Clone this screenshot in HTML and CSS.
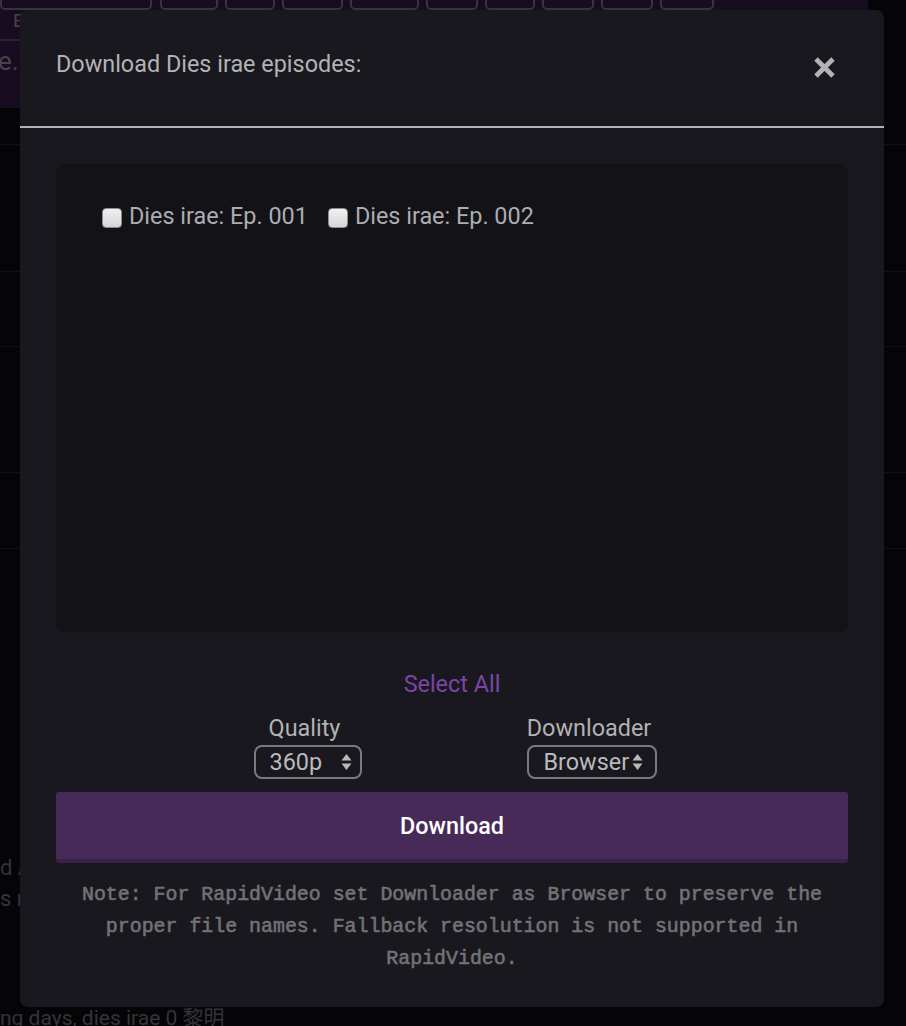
FILE: index.html
```html
<!DOCTYPE html>
<html lang="en">
<head>
<meta charset="utf-8">
<title>Download Dies irae episodes</title>
<link rel="stylesheet" href="styles.css">
</head>
<body>
<div class="page">
  <header class="site-header">
    <nav class="tabs">
      <span class="tab"></span><span class="tab"></span><span class="tab"></span><span class="tab"></span><span class="tab"></span><span class="tab"></span><span class="tab"></span><span class="tab"></span><span class="tab"></span><span class="tab"></span>
    </nav>
    <div class="subbar">E</div>
    <h1 class="site-title">e.i</h1>
  </header>
  <ul class="rows">
    <li class="row row-a"></li>
    <li class="row row-b"></li>
    <li class="row row-c"></li>
    <li class="row row-d"></li>
    <li class="row row-e"></li>
  </ul>
  <div class="bg-desc">
    <p>d A</p>
    <p>s n</p>
  </div>
  <p class="bg-tags">ng days, dies irae 0 黎明</p>
</div>

<div class="backdrop"></div>

<div class="modal" role="dialog">
  <div class="modal-header">
    <h2 class="modal-title">Download Dies irae episodes:</h2>
    <button class="close" aria-label="Close">
      <svg width="23" height="23" viewBox="0 0 23 23"><path d="M3 3 L20 20 M20 3 L3 20" stroke="#b3b3b3" stroke-width="4.8" fill="none"/></svg>
    </button>
  </div>
  <div class="modal-body">
    <div class="episodes">
      <label class="ep"><span class="box"></span>Dies irae: Ep. 001</label>
      <label class="ep"><span class="box"></span>Dies irae: Ep. 002</label>
    </div>
    <a class="select-all">Select All</a>
    <div class="options">
      <div class="opt opt-quality">
        <div class="opt-label">Quality</div>
        <div class="select"><span>360p</span>
          <svg width="11" height="18" viewBox="0 0 11 18"><path d="M5.5 1 L10.5 7.5 L0.5 7.5 Z M0.5 10.5 L10.5 10.5 L5.5 17 Z" fill="#b8b8b8"/></svg>
        </div>
      </div>
      <div class="opt opt-dl">
        <div class="opt-label">Downloader</div>
        <div class="select"><span>Browser</span>
          <svg width="11" height="18" viewBox="0 0 11 18"><path d="M5.5 1 L10.5 7.5 L0.5 7.5 Z M0.5 10.5 L10.5 10.5 L5.5 17 Z" fill="#b8b8b8"/></svg>
        </div>
      </div>
    </div>
    <button class="download">Download</button>
    <p class="note">Note: For RapidVideo set Downloader as Browser to preserve the proper file names. Fallback resolution is not supported in RapidVideo.</p>
  </div>
</div>
</body>
</html>
```

FILE: styles.css
```css
* { box-sizing: border-box; }
html, body { margin: 0; padding: 0; }
body {
  width: 906px;
  height: 1026px;
  overflow: hidden;
  background: #060608;
  font-family: Roboto, "Noto Sans", "Noto Sans CJK SC", sans-serif;
  position: relative;
}

/* ---------- page behind the dialog ---------- */
.page { width: 906px; }
.site-header {
  width: 868px;
  height: 108px;
  background: #1a0d22;
}
.tabs {
  display: flex;
  gap: 7px;
  height: 10px;
  overflow: hidden;
}
.tab {
  flex: none;
  height: 24px;
  margin-top: -14px;
  border: 2px solid #3b3641;
  border-radius: 5px;
}
.tab:nth-child(1) { width: 152px; margin-right: 1px; }
.tab:nth-child(2) { width: 58px; }
.tab:nth-child(3) { width: 50px; }
.tab:nth-child(4) { width: 61px; }
.tab:nth-child(5) { width: 69px; }
.tab:nth-child(6) { width: 52px; }
.tab:nth-child(7) { width: 50px; }
.tab:nth-child(8) { width: 52px; }
.tab:nth-child(9) { width: 52px; }
.tab:nth-child(10) { width: 54px; }
.subbar {
  height: 31px;
  padding-left: 13px;
  border-bottom: 2px solid #2c2731;
  color: #4a4650;
  font-size: 19px;
  line-height: 21px;
}
.site-title {
  margin: 0 0 0 -2px;
  padding-top: 5px;
  color: #4b4752;
  font-size: 26px;
  font-weight: 400;
  line-height: 30px;
}
.rows { list-style: none; margin: 0; padding: 0; }
.row { border-bottom: 1px solid #121215; }
.row-a { height: 37px; }
.row-b { height: 127px; }
.row-c { height: 75px; }
.row-d { height: 126px; }
.row-e { height: 76px; }
.bg-desc {
  padding-top: 303px;
  color: #38373c;
  font-size: 22px;
}
.bg-desc p { margin: 0; line-height: 31px; }
.bg-tags {
  margin: 91px 0 0;
  color: #38373c;
  font-size: 21px;
  line-height: 26px;
}

.backdrop {
  position: absolute;
  inset: 0;
  background: rgba(0, 0, 0, 0.05);
}

/* ---------- dialog ---------- */
.modal {
  position: absolute;
  left: 20px;
  top: 10px;
  width: 864px;
  height: 997px;
  background: #19181e;
  border-radius: 8px;
  display: flex;
  flex-direction: column;
}
.modal-header {
  height: 118px;
  border-bottom: 2px solid #b4b4b6;
  display: flex;
  justify-content: space-between;
  align-items: flex-start;
  padding: 0 48px 0 36px;
}
.modal-title {
  margin: 41px 0 0;
  color: #b3b3b5;
  font-size: 23.4px;
  font-weight: 400;
  line-height: 26px;
}
.close {
  margin-top: 46px;
  padding: 0;
  border: 0;
  background: none;
  width: 23px;
  height: 23px;
}
.close svg { display: block; }

.modal-body {
  padding: 36px 36px 0;
  display: flex;
  flex-direction: column;
  align-items: center;
}
.episodes {
  align-self: stretch;
  height: 468px;
  background: #131217;
  border-radius: 8px;
  padding: 39px 46px;
  display: flex;
  gap: 20px;
  align-items: flex-start;
}
.ep {
  display: flex;
  align-items: center;
  gap: 7px;
  color: #acadb1;
  font-size: 23.4px;
  line-height: 26px;
}
.box {
  width: 20px;
  height: 20px;
  margin-top: 3px;
  border: 1px solid #8d8d90;
  border-radius: 4px;
  background: linear-gradient(#f1f1f1, #d6d6d6);
}

.select-all {
  margin-top: 39px;
  color: #7b45a8;
  font-size: 23.4px;
  line-height: 26px;
}

.options {
  display: flex;
  gap: 165px;
  margin-top: 18px;
  padding-left: 6px;
}
.opt {
  display: flex;
  flex-direction: column;
  align-items: center;
}
.opt-label {
  color: #b2b2b4;
  font-size: 23.4px;
  line-height: 26px;
}
.opt-quality .opt-label { margin-right: 6px; }
.opt-dl .opt-label { margin-right: 5px; }
.select {
  margin-top: 4px;
  height: 34px;
  border: 2px solid #7a7a7e;
  border-radius: 8px;
  display: flex;
  align-items: center;
  color: #bababc;
  font-size: 23.4px;
}
.opt-quality .select { width: 108px; padding: 0 8px 0 14px; justify-content: space-between; }
.opt-dl .select { width: 130px; padding: 0 8px 0 15px; gap: 3px; }
.select svg { display: block; flex: none; }

.download {
  align-self: stretch;
  margin-top: 13px;
  height: 71px;
  border: 0;
  border-bottom: 4px solid #3a2149;
  border-radius: 3px;
  background: #482a59;
  color: #ffffff;
  font-family: Roboto, sans-serif;
  font-size: 23.4px;
  font-weight: 500;
  padding: 0;
}

.note {
  width: 792px;
  margin: 16px 0 0;
  text-align: center;
  color: #727275;
  font-family: "Liberation Mono", "Courier New", monospace;
  font-weight: 400;
  -webkit-text-stroke: 0.6px #727275;
  font-size: 19.9px;
  line-height: 32px;
}
```
